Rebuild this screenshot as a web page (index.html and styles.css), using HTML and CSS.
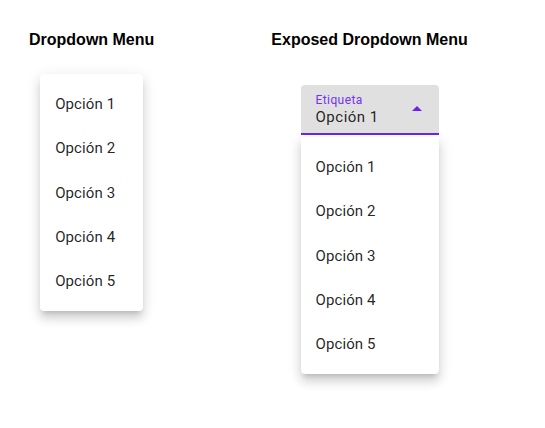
FILE: index.html
```html
<!DOCTYPE html>
<html>
<head>
    <title>Dropdown Menus</title>
    <link rel="stylesheet" href="styles.css">
</head>
<body>
    <div class="demo">
        <!-- Dropdown simple -->
        <section class="col">
            <h3>Dropdown Menu</h3>
            <ul class="menu">
                <li>Opción 1</li>
                <li>Opción 2</li>
                <li>Opción 3</li>
                <li>Opción 4</li>
                <li>Opción 5</li>
            </ul>
        </section>

        <!-- Dropdown expuesto -->
        <section class="col">
            <h3>Exposed Dropdown Menu</h3>
            <div class="exposed">
                <div class="field">
                    <span class="field-label">Etiqueta</span>
                    <span class="field-value">Opción 1</span>
                    <svg class="arrow" width="10" height="5" viewBox="0 0 10 5"><path d="M0 5 L5 0 L10 5 Z" fill="#6a22ee"/></svg>
                </div>
                <ul class="menu attached">
                    <li>Opción 1</li>
                    <li>Opción 2</li>
                    <li>Opción 3</li>
                    <li>Opción 4</li>
                    <li>Opción 5</li>
                </ul>
            </div>
        </section>
    </div>
</body>
</html>
```

FILE: styles.css
```css
body {
    margin: 0;
    background: #ffffff;
    font-family: Roboto, "Liberation Sans", sans-serif;
    color: rgba(0, 0, 0, 0.87);
}

.demo {
    display: flex;
    gap: 117px;
    padding: 30px 0 40px 29px;
}

.col {
    display: flex;
    flex-direction: column;
    align-items: center;
}

h3 {
    margin: 0;
    font-family: "Liberation Sans", Arial, sans-serif;
    font-weight: bold;
    font-size: 16px;
    line-height: 20px;
    color: #000000;
}

.menu {
    list-style: none;
    margin: 24px 0 0 0;
    padding: 8px 0;
    width: 103px;
    background: #ffffff;
    border-radius: 4px;
    box-shadow: 0 5px 5px -3px rgba(0, 0, 0, 0.16), 0 8px 10px 1px rgba(0, 0, 0, 0.1), 0 3px 14px 2px rgba(0, 0, 0, 0.08);
}

.menu li {
    height: 44.25px;
    line-height: 44px;
    padding: 0 15px;
    font-size: 15px;
    letter-spacing: 0.1px;
}

.exposed {
    margin-top: 35px;
    width: 138px;
}

.field {
    position: relative;
    height: 48px;
    padding: 0 15px;
    background: #e0e0e0;
    border-radius: 4px 4px 0 0;
    border-bottom: 2px solid #6a22ee;
    display: flex;
    flex-direction: column;
    justify-content: center;
}

.field-label {
    font-size: 12px;
    line-height: 14px;
    color: #7433f0;
    letter-spacing: 0.4px;
    margin-top: 2px;
}

.field-value {
    font-size: 15px;
    line-height: 21px;
    letter-spacing: 0.5px;
}

.arrow {
    position: absolute;
    right: 17px;
    top: 21px;
}

.menu.attached {
    margin: 2px 0 0 0;
    width: auto;
    border-radius: 0 0 4px 4px;
}
```
